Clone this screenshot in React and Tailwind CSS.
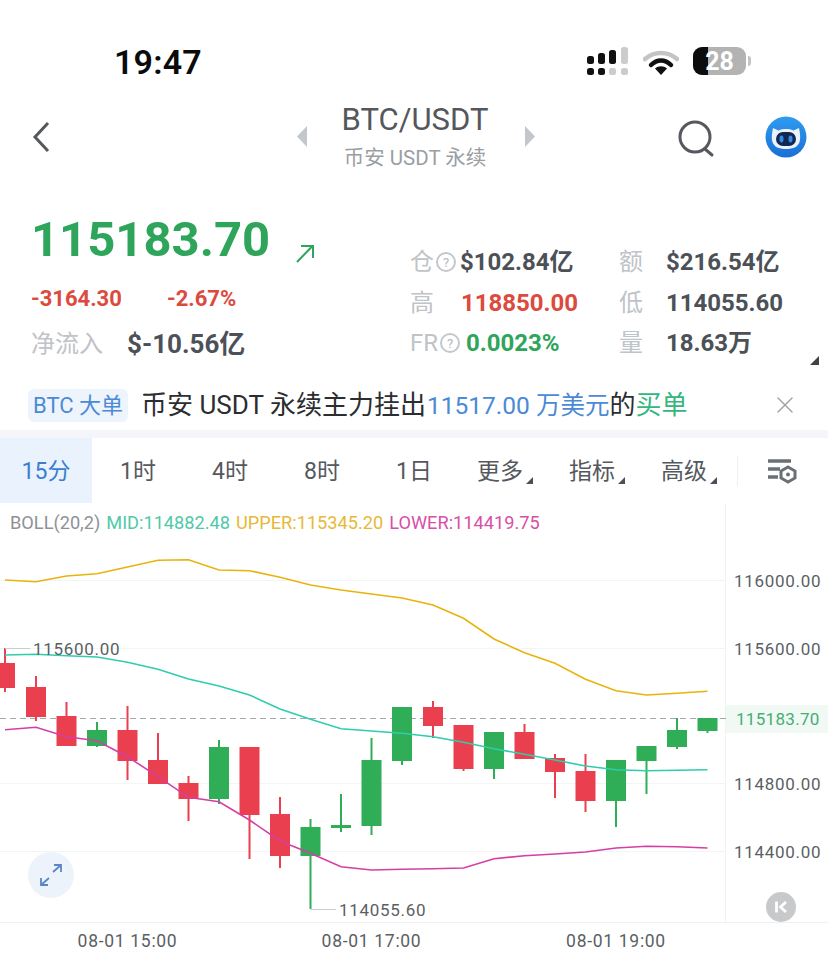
import { X } from "lucide-react";

const FONT = "font-['Roboto','Noto_Sans_CJK_SC',sans-serif]";

const candles = [
  [5, 663, 688, 648, 692, "r"],
  [36, 687, 717, 676, 721, "r"],
  [66.5, 716, 746, 702, 746, "r"],
  [97, 730, 746, 722, 747, "g"],
  [127.5, 730, 761, 706, 780, "r"],
  [158, 760, 784, 733, 784, "r"],
  [188.5, 783, 799, 776, 821, "r"],
  [219, 747, 799, 740, 804, "g"],
  [249.5, 747, 815, 747, 859, "r"],
  [280, 814, 856, 797, 868, "r"],
  [310.5, 827, 856, 819, 909, "g"],
  [341, 825, 828, 794, 832, "g"],
  [371.5, 760, 826, 738, 835, "g"],
  [402, 707, 761, 707, 765, "g"],
  [433, 707, 726, 701, 738, "r"],
  [463.5, 725, 769, 725, 771, "r"],
  [494, 732, 769, 732, 779, "g"],
  [524.5, 732, 759, 724, 759, "r"],
  [555, 758, 772, 754, 798, "r"],
  [585.5, 771, 801, 754, 812, "r"],
  [616, 760, 801, 760, 827, "g"],
  [646.5, 746, 761, 746, 794, "g"],
  [677, 730, 747, 718, 749, "g"],
  [707.5, 718, 731, 718, 733, "g"],
];

const xs = candles.map((c) => c[0]);
const line = (ys) => ys.map((y, i) => `${xs[i]},${y}`).join(" ");

const upper = [580, 581.7, 576, 573.7, 567, 560.3, 559.7, 570, 570.7, 577.3, 585, 590, 594, 598, 605, 618.3, 639, 652.7, 663.3, 679.3, 690.7, 695, 693.3, 691.3];
const mid = [655, 654.3, 655.7, 657, 662.3, 669.3, 679, 686, 695, 709, 719.3, 728.7, 731, 733.3, 736.7, 742.3, 748.7, 754.3, 760, 766, 769.7, 770.7, 770.3, 769.7];
const lower = [729.7, 727.3, 736.7, 740.7, 756.7, 776.7, 797.3, 801.7, 820, 841, 853.3, 866.7, 870, 869.3, 868.7, 868, 858.7, 855.7, 854, 852, 848, 846.3, 846.7, 848];

const tabs = ["15分", "1时", "4时", "8时", "1日", "更多", "指标", "高级"];

function Hint() {
  return (
    <span className="inline-flex h-[20px] w-[20px] items-center justify-center rounded-full border-2 border-[#c4c7cb] text-[13px] leading-none text-[#b5b8bc]">?</span>
  );
}

function Corner() {
  return <span className="absolute bottom-[19px] right-[19px] h-0 w-0 border-b-[7px] border-l-[7px] border-b-[#4c5157] border-l-transparent" />;
}

function StatusBar() {
  return (
    <div className="flex h-[100px] items-start pt-[42px]">
      <span className="ml-[114px] text-[34px] font-semibold leading-[40px] tracking-[0.2px] text-[#0b0b0b]">19:47</span>
      <svg className="ml-[384px] mt-[5px]" width="44" height="30" viewBox="0 0 44 30">
        <rect x="1" y="9" width="7" height="8" rx="2.5" fill="#111" />
        <rect x="12" y="6" width="7" height="11" rx="2.5" fill="#111" />
        <rect x="23" y="3" width="7" height="14" rx="2.5" fill="#111" />
        <rect x="35" y="0" width="7" height="17" rx="2.5" fill="#ccc" />
        <rect x="1" y="21" width="7" height="7" rx="2.5" fill="#111" />
        <rect x="12" y="21" width="7" height="7" rx="2.5" fill="#111" />
        <rect x="23" y="21" width="7" height="7" rx="2.5" fill="#ccc" />
        <rect x="35" y="21" width="7" height="7" rx="2.5" fill="#ccc" />
      </svg>
      <svg className="ml-[13px] mt-[8px]" width="36" height="26" viewBox="0 0 36 26">
        <path d="M2 9C11 1 25 1 34 9" fill="none" stroke="#c4c4c4" strokeWidth="4.5" strokeLinecap="round" />
        <path d="M8 15C14 9 22 9 28 15" fill="none" stroke="#111" strokeWidth="4.5" strokeLinecap="round" />
        <path d="M12 18.5C15.5 15.5 20.5 15.5 24 18.5L18 25Z" fill="#111" />
      </svg>
      <div className="relative ml-[14px] mt-[5px] flex h-[28px] w-[53px] items-center justify-center overflow-hidden rounded-[9px] bg-[#b3b3b3]">
        <span className="absolute inset-y-0 left-0 w-[15px] bg-[#0d0d0d]" />
        <span className="relative text-[25px] font-bold leading-none text-white">28</span>
      </div>
      <span className="ml-[2px] mt-[14px] h-[10px] w-[3px] rounded-r-sm bg-[#c4c4c4]" />
    </div>
  );
}

function Robot() {
  return (
    <svg width="42" height="42" viewBox="0 0 42 42">
      <defs>
        <linearGradient id="robotBg" x1="0" y1="0" x2="0" y2="1">
          <stop offset="0" stopColor="#2f9cf0" />
          <stop offset="1" stopColor="#1a6fd6" />
        </linearGradient>
      </defs>
      <circle cx="21" cy="21" r="20.5" fill="url(#robotBg)" />
      <path d="M8 12L13.5 14.5C18 12.6 24 12.6 28.5 14.5L34 12C35 17 35.5 21 35 24C34 31 28 33 21 33C14 33 8 31 7 24C6.5 21 7 17 8 12Z" fill="#eaf2fb" />
      <rect x="11" y="16" width="20" height="14" rx="7" fill="#14284f" />
      <ellipse cx="16.5" cy="23" rx="2" ry="3.4" fill="#2f8fe8" />
      <ellipse cx="25.5" cy="23" rx="2" ry="3.4" fill="#2f8fe8" />
    </svg>
  );
}

function NavBar() {
  return (
    <div className="flex h-[80px] items-center pb-[7px]">
      <svg className="ml-[31px]" width="20" height="32" viewBox="0 0 20 32">
        <path d="M17 2L4 16L17 30" fill="none" stroke="#55585c" strokeWidth="3" />
      </svg>
      <svg className="ml-[245px]" width="12" height="21" viewBox="0 0 12 21">
        <path d="M11 0V21L1 10.5Z" fill="#c3c6ca" />
      </svg>
      <div className="ml-[33px] flex w-[148px] flex-col items-center">
        <span className="whitespace-nowrap text-[31px] leading-[36px] text-[#54575b]">BTC/USDT</span>
        <span className="mt-[6px] whitespace-nowrap text-[20.5px] leading-[28px] text-[#9a9ea3]">币安 USDT 永续</span>
      </div>
      <svg className="ml-[35px]" width="12" height="21" viewBox="0 0 12 21">
        <path d="M1 0V21L11 10.5Z" fill="#c3c6ca" />
      </svg>
      <svg className="ml-[142px] mt-[5px]" width="38" height="38" viewBox="0 0 38 38">
        <circle cx="17" cy="17" r="15" fill="none" stroke="#55585c" strokeWidth="3" />
        <path d="M27 29L34 35" fill="none" stroke="#55585c" strokeWidth="3" strokeLinecap="round" />
      </svg>
      <div className="ml-[49px] mt-[1px]">
        <Robot />
      </div>
    </div>
  );
}

function Stats() {
  const label = "text-[24px] leading-[30px] text-[#c0c3c7]";
  const value = "text-[24px] font-bold leading-[30px] whitespace-nowrap";
  const dark = "text-[#4c5157]";
  return (
    <div className="flex h-[208px] pt-[30px]">
      <div className="ml-[31px] w-[379px]">
        <div className="flex h-[60px] items-start">
          <span className="text-[49px] font-bold leading-[60px] text-[#2ea55b]">115183.70</span>
          <svg className="ml-[25px] mt-[34px]" width="20" height="20" viewBox="0 0 20 20">
            <path d="M2 18L17 2.5M6 2H18V14" fill="none" stroke="#2ea55b" strokeWidth="2" />
          </svg>
        </div>
        <div className="mt-[15px] flex items-center text-[22px] font-bold leading-[28px] text-[#dc4a3e]">
          <span className="w-[136px]">-3164.30</span>
          <span>-2.67%</span>
        </div>
        <div className="mt-[14px] flex items-center">
          <span className="w-[96px] text-[24px] leading-[34px] text-[#c0c3c7]">净流入</span>
          <span className="text-[26px] font-bold leading-[34px] text-[#4c5157]">$-10.56亿</span>
        </div>
      </div>
      <div className="mt-[37px] grid h-[122px] grid-cols-[209px_1fr] content-start gap-y-[10.5px]">
        <div className="flex items-center">
          <span className={`${label} w-[26px]`}>仓</span>
          <Hint />
          <span className={`${value} ${dark} ml-[4px]`}>$102.84亿</span>
        </div>
        <div className="flex items-center">
          <span className={`${label} w-[47px]`}>额</span>
          <span className={`${value} ${dark}`}>$216.54亿</span>
        </div>
        <div className="flex items-center">
          <span className={`${label} w-[51px]`}>高</span>
          <span className={`${value} text-[#dc4a3e]`}>118850.00</span>
        </div>
        <div className="flex items-center">
          <span className={`${label} w-[47px]`}>低</span>
          <span className={`${value} ${dark}`}>114055.60</span>
        </div>
        <div className="flex items-center">
          <span className={`${label} w-[30px]`}>FR</span>
          <Hint />
          <span className={`${value} ml-[6px] text-[#2ea55b]`}>0.0023%</span>
        </div>
        <div className="flex items-center">
          <span className={`${label} w-[47px]`}>量</span>
          <span className={`${value} ${dark}`}>18.63万</span>
        </div>
      </div>
      <span className="absolute left-[810px] top-[356px] h-0 w-0 border-b-[9px] border-l-[9px] border-b-[#3f4348] border-l-transparent" />
    </div>
  );
}

function Banner() {
  return (
    <div className="flex h-[42px] items-center pb-[8px]">
      <span className="ml-[28px] rounded-[6px] bg-[#eef4fc] px-[5px] text-[22px] leading-[33px] text-[#4a8ad6]">BTC 大单</span>
      <span className="ml-[13px] whitespace-nowrap text-[26px] leading-[33px] text-[#2b2d30]">
        币安 USDT 永续主力挂出<span className="ml-[1px] text-[24.5px] text-[#4a8ad6]">11517.00 万美元</span>的<span className="text-[#35b67e]">买单</span>
      </span>
      <X className="ml-auto mr-[29px]" size={28} strokeWidth={1.2} color="#9ea2a7" />
    </div>
  );
}

function Tabs() {
  return (
    <div className="flex h-[65px] items-center">
      {tabs.map((t, i) => (
        <div
          key={t}
          className={`relative flex h-full w-[92px] items-center justify-center pt-[3px] text-[23px] ${
            i === 0 ? "bg-[#eaf3fd] text-[#3b7fd0]" : "text-[#55595e]"
          } ${i > 4 ? "pr-[12px]" : ""}`}
        >
          {t}
          {i > 4 && <Corner />}
        </div>
      ))}
      <span className="ml-[1px] h-[30px] w-px bg-[#eeeff1]" />
      <svg className="ml-[29px]" width="30" height="26" viewBox="0 0 30 26">
        <path d="M1 3H24M1 11H13M1 19H11" fill="none" stroke="#6b7076" strokeWidth="3.5" />
        <path d="M21 9L28 13V20L21 24L14 20V13Z" fill="none" stroke="#6b7076" strokeWidth="3" />
        <circle cx="21" cy="16.5" r="2" fill="#6b7076" />
      </svg>
    </div>
  );
}

function Chart() {
  const axisText = { fontSize: 17, letterSpacing: 0.7, fill: "#5b5f64" };
  const timeText = { fontSize: 17.5, letterSpacing: 0.7, fill: "#5b5f64" };
  return (
    <div className="relative h-[453px]">
      <div className="absolute left-[10px] top-[10px] flex gap-x-[6px] whitespace-nowrap text-[18.2px] leading-[20px] text-[#8e9297]">
        <span>BOLL(20,2)</span>
        <span className="text-[#4fc9a8]">MID:114882.48</span>
        <span className="text-[#e6b93a]">UPPER:115345.20</span>
        <span className="text-[#d84fa8]">LOWER:114419.75</span>
      </div>
      <svg className="block" width="828" height="453" viewBox="0 503 828 453">
        {[580.5, 648.5, 783.5, 851.5].map((y) => (
          <line key={y} x1="0" x2="725" y1={y} y2={y} stroke="#f3f4f5" />
        ))}
        <line x1="725.5" x2="725.5" y1="503" y2="922" stroke="#f1f2f3" />
        <line x1="0" x2="828" y1="922.5" y2="922.5" stroke="#eff0f1" />
        <rect x="726" y="705" width="102" height="28" fill="#f0f9f3" />
        <line x1="0" x2="726" y1="718.5" y2="718.5" stroke="#a3a7ab" strokeDasharray="6 4" />

        {candles.map(([x, top, bottom, high, low, c]) => {
          const color = c === "r" ? "#e93f4e" : "#2fae57";
          return (
            <g key={x}>
              <line x1={x} x2={x} y1={high} y2={low} stroke={color} strokeWidth="2" />
              <rect x={x - 10} y={top} width="20" height={bottom - top} fill={color} />
            </g>
          );
        })}

        <polyline points={line(upper)} fill="none" stroke="#e9b30d" strokeWidth="1.6" />
        <polyline points={line(mid)} fill="none" stroke="#2fcdae" strokeWidth="1.6" />
        <polyline points={line(lower)} fill="none" stroke="#d43fa5" strokeWidth="1.6" />

        <line x1="5" x2="30" y1="648.5" y2="648.5" stroke="#c9ccd0" />
        <text x="33" y="655" {...axisText}>115600.00</text>
        <line x1="311" x2="336" y1="909.5" y2="909.5" stroke="#c9ccd0" />
        <text x="339" y="916" {...axisText}>114055.60</text>

        <text x="734" y="587" {...axisText}>116000.00</text>
        <text x="734" y="655" {...axisText}>115600.00</text>
        <text x="736" y="725" fontSize="17" letterSpacing="0.3" fill="#46ad74">115183.70</text>
        <text x="734" y="790" {...axisText}>114800.00</text>
        <text x="734" y="858" {...axisText}>114400.00</text>

        <text x="127.5" y="947" textAnchor="middle" {...timeText}>08-01 15:00</text>
        <text x="371.5" y="947" textAnchor="middle" {...timeText}>08-01 17:00</text>
        <text x="616" y="947" textAnchor="middle" {...timeText}>08-01 19:00</text>
      </svg>

      <div className="absolute left-[28px] top-[349px] flex h-[46px] w-[46px] items-center justify-center rounded-full bg-[#edf3fb]">
        <svg width="24" height="24" viewBox="0 0 24 24">
          <path d="M14 9L22 2M15 2H22V9M10 15L2 22M2 15V22H9" fill="none" stroke="#5b86c4" strokeWidth="1.8" />
        </svg>
      </div>
      <div className="absolute left-[766px] top-[389px] flex h-[30px] w-[30px] items-center justify-center rounded-full bg-[#c8c9cb]">
        <svg width="16" height="16" viewBox="0 0 16 16">
          <path d="M3.5 2.5V13.5" fill="none" stroke="#fff" strokeWidth="2.8" />
          <path d="M13 3L7.5 8L13 13" fill="none" stroke="#fff" strokeWidth="2.8" />
        </svg>
      </div>
    </div>
  );
}

export default function App() {
  return (
    <div className={`relative h-[956px] w-[828px] overflow-hidden bg-white ${FONT}`}>
      <StatusBar />
      <NavBar />
      <Stats />
      <Banner />
      <div className="h-[8px] bg-[#f4f6f9]" />
      <Tabs />
      <Chart />
    </div>
  );
}
